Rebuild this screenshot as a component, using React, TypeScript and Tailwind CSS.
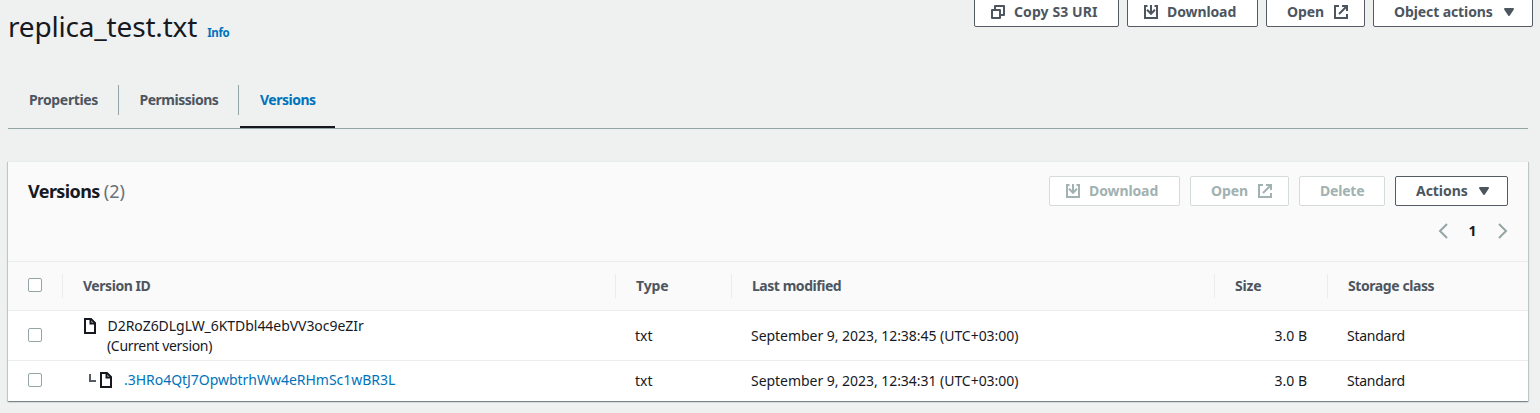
import type { ReactNode } from "react";

type IconProps = { children: ReactNode; className?: string };

function Icon({ children, className = "" }: IconProps) {
  return (
    <svg
      viewBox="0 0 16 16"
      className={`h-4 w-4 shrink-0 fill-none stroke-current stroke-2 ${className}`}
      aria-hidden="true"
    >
      {children}
    </svg>
  );
}

const CopyIcon = () => (
  <Icon>
    <path d="M2 6h8v8H2z" strokeLinejoin="round" />
    <path d="M5 6V2h9v9h-4" strokeLinejoin="round" />
  </Icon>
);

const DownloadIcon = () => (
  <Icon>
    <path d="M4.500 2H2v12h12V2h-2.500" />
    <path d="M8 1v8.500M4 5.800l4 4 4-4" />
  </Icon>
);

const ExternalIcon = () => (
  <Icon>
    <path d="M6 2H2v12h12v-4" />
    <path d="M9 2h5v5M14 2l-8 8" />
  </Icon>
);

const CaretIcon = () => (
  <svg viewBox="0 0 16 16" className="h-4 w-4 shrink-0 fill-current stroke-current stroke-2" aria-hidden="true">
    <path d="M4 5h8l-4 6z" strokeLinejoin="round" />
  </svg>
);

const FileIcon = () => (
  <Icon className="text-[#16191f]">
    <path d="M3 1h6l4 4v10H3z" />
    <path d="M8.5 1v4.5H13" />
  </Icon>
);

const BranchIcon = () => (
  <svg viewBox="0 0 8 8" className="mt-[4px] h-2 w-2 shrink-0 fill-none stroke-[#545b64] stroke-2" aria-hidden="true">
    <path d="M2 0v7H8" />
  </svg>
);

type ButtonProps = { children: ReactNode; className: string; disabled?: boolean };

function Button({ children, className, disabled = false }: ButtonProps) {
  const tone = disabled ? "border-[#d5dbdb] text-[#a2b1b1]" : "border-[#545b64] text-[#4d565f]";
  return (
    <button
      type="button"
      disabled={disabled}
      className={`flex h-[30px] items-center rounded-[2px] border bg-white text-sm font-bold leading-5 whitespace-nowrap ${className} ${tone}`}
    >
      {children}
    </button>
  );
}

function Checkbox() {
  return (
    <span
      role="checkbox"
      aria-checked="false"
      className="mb-[2px] block h-[14px] w-[14px] rounded-[2px] border border-[#95a5a6] bg-white"
    />
  );
}

const columns = "grid grid-cols-[54px_553px_116px_483px_113px_1fr] items-center";

function HeadCell({ children, className }: { children: string; className: string }) {
  return (
    <div className="flex h-6 items-center border-l border-[#eaeded] pl-5">
      <span className={className}>{children}</span>
    </div>
  );
}

function Row({ name, modified, height }: { name: ReactNode; modified: string; height: string }) {
  return (
    <div className={`${columns} ${height}`}>
      <div className="pl-5">
        <Checkbox />
      </div>
      {name}
      <div className="pl-5">txt</div>
      <div className="pl-5 tracking-[-0.04px]">{modified}</div>
      <div className="pr-5 text-right">3.0 B</div>
      <div className="pl-5 tracking-[-0.25px]">Standard</div>
    </div>
  );
}

export default function App() {
  return (
    <div className="h-[413px] overflow-hidden bg-[#eff1f1] font-['Noto_Sans','Open_Sans',sans-serif] text-sm leading-5 text-[#16191f]">
      <header className="flex h-[85px] items-start justify-between pr-[7px] pl-2">
        <div className="flex items-baseline pt-[8px]">
          <h1 className="text-[28px] leading-9 tracking-[-0.18px]">replica_test.txt</h1>
          <a className="ml-[10px] text-[11.5px] font-bold tracking-[-0.3px] text-[#0073bb]">Info</a>
        </div>
        <div className="-mt-[3px] flex gap-2">
          <Button className="w-[145px] pl-[15px]">
            <CopyIcon />
            <span className="ml-2 tracking-[0.1px]">Copy S3 URI</span>
          </Button>
          <Button className="w-[131px] pl-[15px]">
            <DownloadIcon />
            <span className="ml-2 tracking-[-0.1px]">Download</span>
          </Button>
          <Button className="w-[99px] pl-5">
            <span className="mr-[9px] tracking-[-0.1px]">Open</span>
            <ExternalIcon />
          </Button>
          <Button className="w-[160px] pl-5">
            <span className="mr-2 tracking-[-0.1px]">Object actions</span>
            <CaretIcon />
          </Button>
        </div>
      </header>

      <nav className="mr-3 ml-2 flex h-11 border-b border-[#95a5a6] font-bold text-[#4d565f]">
        <div className="flex h-[30px] w-[111px] items-center border-r border-[#95a5a6] pl-[21px] tracking-[-0.35px]">Properties</div>
        <div className="flex h-[30px] w-[120px] items-center border-r border-[#95a5a6] pl-[20.5px] tracking-[-0.5px]">Permissions</div>
        <div className="ml-px h-[43px] w-[95px] border-b-2 border-[#16191f] pt-[5px] pl-5 tracking-[-0.5px] text-[#0073bb]">Versions</div>
      </nav>

      <section className="mt-8 mr-3 ml-2 border-t border-[#eaeded] bg-white shadow-[0_1px_1px_0_rgba(0,28,36,0.3),1px_1px_1px_0_rgba(0,28,36,0.15),-1px_1px_1px_0_rgba(0,28,36,0.15)]">
        <div className="h-[100px] border-b border-[#eaeded] bg-[#fafafa] px-5 pt-[14px]">
          <div className="flex items-center justify-between">
            <h2 className="text-lg font-bold leading-[30px] tracking-[-0.6px]">
              Versions <span className="font-normal tracking-normal text-[#687078]">(2)</span>
            </h2>
            <div className="flex gap-[10px]">
              <Button className="w-[131px] pl-[15px]" disabled>
                <DownloadIcon />
                <span className="ml-2 tracking-[-0.1px]">Download</span>
              </Button>
              <Button className="w-[99px] pl-5" disabled>
                <span className="mr-[9px] tracking-[-0.1px]">Open</span>
                <ExternalIcon />
              </Button>
              <Button className="w-[86px] pl-5" disabled>
                <span className="tracking-[-0.2px]">Delete</span>
              </Button>
              <Button className="w-[113px] pl-5">
                <span className="mr-2 tracking-[-0.05px]">Actions</span>
                <CaretIcon />
              </Button>
            </div>
          </div>
          <div className="mt-[15px] flex h-5 items-center justify-end">
            <Icon className="text-[#95a5a6]">
              <path d="M13 1L6 8l7 7" />
            </Icon>
            <span className="w-[42px] pl-[3px] text-center font-bold">1</span>
            <Icon className="text-[#95a5a6]">
              <path d="M7 1l7 7-7 7" />
            </Icon>
          </div>
        </div>

        <div className={`${columns} h-[49px] border-b border-[#eaeded] bg-[#fafafa] font-bold text-[#4d565f]`}>
          <div className="pl-5">
            <Checkbox />
          </div>
          <HeadCell className="tracking-[-0.45px]">Version ID</HeadCell>
          <HeadCell className="tracking-[-0.1px]">Type</HeadCell>
          <HeadCell className="tracking-[-0.46px]">Last modified</HeadCell>
          <HeadCell className="tracking-[-0.2px]">Size</HeadCell>
          <HeadCell className="tracking-[-0.42px]">Storage class</HeadCell>
        </div>

        <Row
          height="h-[50px] border-b border-[#eaeded]"
          modified="September 9, 2023, 12:38:45 (UTC+03:00)"
          name={
            <div className="flex pl-5">
              <span className="mt-[2px]">
                <FileIcon />
              </span>
              <div className="ml-[9px]">
                <div className="pl-[0.5px] tracking-[-0.05px]">D2RoZ6DLgLW_6KTDbl44ebVV3oc9eZIr</div>
                <div className="tracking-[-0.33px]">(Current version)</div>
              </div>
            </div>
          }
        />
        <Row
          height="h-10"
          modified="September 9, 2023, 12:34:31 (UTC+03:00)"
          name={
            <div className="flex pb-[2px] pl-[26px]">
              <BranchIcon />
              <span className="mt-[2px] ml-[2px]">
                <FileIcon />
              </span>
              <a className="ml-[10px] tracking-[-0.03px] text-[#0073bb]">.3HRo4QtJ7OpwbtrhWw4eRHmSc1wBR3L</a>
            </div>
          }
        />
      </section>
    </div>
  );
}
